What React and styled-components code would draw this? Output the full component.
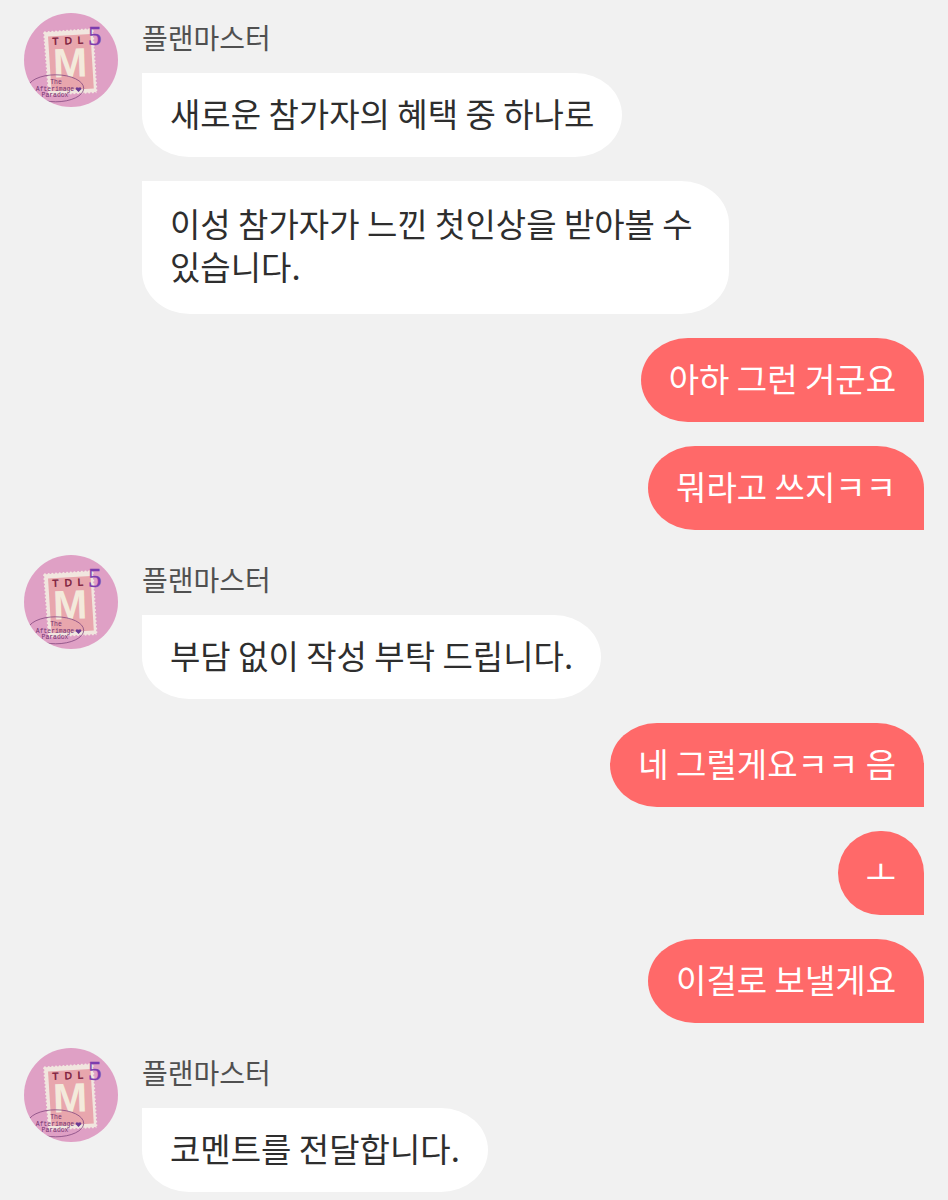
import React from 'react';
import styled, { createGlobalStyle, css } from 'styled-components';

const GlobalStyle = createGlobalStyle`
  *, *::before, *::after { box-sizing: border-box; }
  body {
    margin: 0;
    background: #f1f1f1;
    font-family: "Noto Sans CJK KR", sans-serif;
  }
`;

const Chat = styled.main`
  display: flex;
  flex-direction: column;
  padding: 13px 24px 0;
`;

const Turn = styled.section`
  display: flex;
  gap: 24px;
  margin-bottom: ${({ $mine }) => ($mine ? '25px' : '24px')};

  &:last-child {
    margin-bottom: 8px;
  }
`;

const AvatarFrame = styled.svg`
  flex: none;
  width: 94px;
  height: 94px;
  border-radius: 50%;
`;

const Body = styled.div`
  flex: 1;
  min-width: 0;
`;

const Sender = styled.h2`
  margin: 0 0 12px;
  font-size: 28px;
  line-height: 48px;
  font-weight: 400;
  color: #505050;
`;

const Messages = styled.ul`
  display: flex;
  flex-direction: column;
  align-items: ${({ $mine }) => ($mine ? 'flex-end' : 'flex-start')};
  gap: 24px;
  margin: 0;
  padding: 0;
  list-style: none;
`;

const Bubble = styled.li`
  max-width: 75%;
  padding: ${({ $long }) => ($long ? '21px 28px 26px' : '19px 28px 22px')};
  font-size: 33px;
  line-height: 43px;
  word-break: keep-all;
  ${({ $mine, $short }) => {
    const r = $short ? '43px' : '48px';
    return $mine
      ? css`
          color: #fff;
          background: #ff6969;
          border-radius: ${r} ${r} 0 ${r} / 43px 43px 0 43px;
        `
      : css`
          color: #2e2e2e;
          background: #fff;
          border-radius: 0 ${r} ${r} ${r} / 0 43px 43px 43px;
        `;
  }}
`;

function Avatar() {
  return (
    <AvatarFrame viewBox="0 0 94 94" role="img" aria-label="플랜마스터">
      <rect width="94" height="94" fill="#dfa0c5" />
      <polygon points="19,18.5 69.5,15 73.5,80 24,82.5" fill="#f1e6df" />
      <polygon
        points="19,18.5 69.5,15 73.5,80 24,82.5"
        fill="none"
        stroke="#dfa0c5"
        strokeWidth="2.2"
        strokeLinecap="round"
        strokeDasharray="0.1 3.6"
      />
      <polygon points="24,23.5 66.5,21 69.8,75.5 27.5,78" fill="#e8a6ad" />
      <g transform="rotate(-2 47 46)" fontFamily="Liberation Sans, sans-serif" textAnchor="middle">
        <g fontSize="10" fill="#7c1c3c" stroke="#7c1c3c" strokeWidth="0.5">
          <text x="32" y="31">T</text>
          <text x="45" y="31">D</text>
          <text x="57" y="31">L</text>
        </g>
        <text x="46" y="64" fontSize="41" fontWeight="700" fill="#f3eadb">M</text>
      </g>
      <text x="64" y="32" fontSize="27" fontFamily="Liberation Serif, serif" fill="#7c3cae" stroke="#7c3cae" strokeWidth="0.4">5</text>
      <ellipse cx="31.7" cy="75.3" rx="28" ry="13.5" fill="none" stroke="#83487f" strokeWidth="0.8" />
      <g fontFamily="Liberation Mono, monospace" fontSize="6.4" fill="#74306f" textAnchor="middle">
        <text x="32" y="71">The</text>
        <text x="31" y="77.5">Afterimage</text>
        <text x="31" y="83.5">Paradox</text>
      </g>
      <path d="M54.5 79 L51.5 76 Q52 73 54.5 74.8 Q57 73 57.5 76Z" fill="#6a3a92" />
    </AvatarFrame>
  );
}

const turns = [
  {
    sender: '플랜마스터',
    messages: [
      { text: '새로운 참가자의 혜택 중 하나로' },
      { text: '이성 참가자가 느낀 첫인상을 받아볼 수 있습니다.', long: true },
    ],
  },
  { mine: true, messages: [{ text: '아하 그런 거군요' }, { text: '뭐라고 쓰지ㅋㅋ' }] },
  { sender: '플랜마스터', messages: [{ text: '부담 없이 작성 부탁 드립니다.' }] },
  {
    mine: true,
    messages: [
      { text: '네 그럴게요ㅋㅋ 음' },
      { text: 'ㅗ', short: true },
      { text: '이걸로 보낼게요' },
    ],
  },
  { sender: '플랜마스터', messages: [{ text: '코멘트를 전달합니다.' }] },
];

export default function App() {
  return (
    <>
      <GlobalStyle />
      <Chat>
        {turns.map(({ sender, mine, messages }, i) => (
          <Turn key={i} $mine={mine}>
            {!mine && <Avatar />}
            <Body>
              {!mine && <Sender>{sender}</Sender>}
              <Messages $mine={mine}>
                {messages.map(({ text, long, short }) => (
                  <Bubble key={text} $mine={mine} $long={long} $short={short}>
                    {text}
                  </Bubble>
                ))}
              </Messages>
            </Body>
          </Turn>
        ))}
      </Chat>
    </>
  );
}
